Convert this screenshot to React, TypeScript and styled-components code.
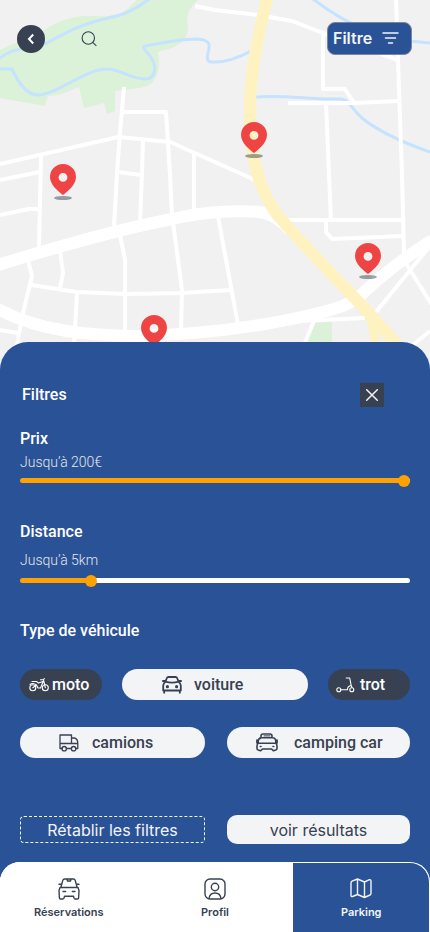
import React, { useState } from "react";
import styled, { createGlobalStyle } from "styled-components";

const color = {
  blue: "#2a5297",
  slate: "#374151",
  light: "#f3f4f6",
  orange: "#ffa200",
  red: "#ef4444",
  white: "#ffffff",
};

const GlobalStyle = createGlobalStyle`
  *, *::before, *::after { box-sizing: border-box; }
  body { margin: 0; background: ${color.blue}; }
  button, input { font: inherit; margin: 0; }
  svg { display: block; flex: none; }
`;

const Page = styled.main`
  display: flex;
  flex-direction: column;
  min-height: 100vh;
  font-family: Roboto, "Liberation Sans", sans-serif;
  color: ${color.white};
  background: ${color.blue};
`;

const MapArea = styled.section`
  position: relative;
  height: 372px;
  overflow: hidden;
  background: #f1f1f1;
`;

const MapDrawing = styled.svg`
  position: absolute;
  inset: 0;
  width: 100%;
  height: 100%;
`;

const Toolbar = styled.header`
  position: relative;
  display: flex;
  align-items: center;
  padding: 22px 18px 0 17px;
`;

const BackButton = styled.button`
  display: grid;
  place-items: center;
  width: 28px;
  height: 28px;
  padding: 0;
  border: 0;
  border-radius: 50%;
  background: ${color.slate};
`;

const SearchButton = styled.button`
  display: grid;
  place-items: center;
  width: 24px;
  height: 24px;
  margin-left: 32px;
  padding: 0;
  border: 0;
  background: none;
`;

const FilterButton = styled.button`
  display: flex;
  align-items: center;
  justify-content: space-between;
  width: 85px;
  height: 33px;
  margin-left: auto;
  padding: 0 12px 2px 5px;
  border: 1px solid #7d8694;
  border-radius: 8px;
  background: ${color.blue};
  color: ${color.light};
  font-family: Inter, sans-serif;
  font-size: 16px;
  font-weight: 600;
`;

const Sheet = styled.section`
  position: relative;
  flex: 1;
  margin-top: -30px;
  padding: 41px 20px 18px;
  border-radius: 28px 28px 0 0;
  background: ${color.blue};
`;

const SheetHeader = styled.div`
  display: flex;
  align-items: center;
  justify-content: space-between;
  padding: 0 26px 0 2px;
`;

const Heading = styled.h2`
  margin: 0;
  font-size: 16px;
  font-weight: 500;
  line-height: 24px;
`;

const CloseButton = styled.button`
  display: grid;
  place-items: center;
  width: 24px;
  height: 24px;
  padding: 0;
  border: 0;
  background: ${color.slate};
`;

const SliderField = styled.div<{ $gap: number }>`
  display: flex;
  flex-direction: column;
  margin-top: ${(p) => p.$gap}px;
`;

const FieldLabel = styled.label`
  font-size: 16px;
  font-weight: 500;
  line-height: 24px;
`;

const Hint = styled.output<{ $above: number; $below: number }>`
  margin: ${(p) => p.$above}px 0 ${(p) => p.$below}px;
  font-size: 14px;
  font-weight: 300;
  line-height: 20px;
  color: #e5e7eb;
`;

const Range = styled.input`
  appearance: none;
  width: 100%;
  height: 12px;
  margin: 0;
  background: transparent;
  &::-webkit-slider-runnable-track {
    height: 5px;
    border-radius: 3px;
    background: linear-gradient(${color.orange}, ${color.orange}) 0 0 / var(--fill) 100% no-repeat ${color.white};
  }
  &::-webkit-slider-thumb {
    appearance: none;
    width: 12px;
    height: 12px;
    margin-top: -3px;
    border-radius: 50%;
    background: ${color.orange};
  }
`;

const TypeHeading = styled(Heading)`
  margin-top: 33px;
`;

const ChipRow = styled.div<{ $columns: string; $gap: number; $above: number }>`
  display: grid;
  grid-template-columns: ${(p) => p.$columns};
  column-gap: ${(p) => p.$gap}px;
  margin-top: ${(p) => p.$above}px;
`;

const ChipButton = styled.button<{ $dark?: boolean; $gap: number; $inset: number }>`
  display: flex;
  align-items: center;
  gap: ${(p) => p.$gap}px;
  height: 31px;
  padding: 0 0 0 ${(p) => p.$inset}px;
  border: 0;
  border-radius: 16px;
  background: ${(p) => (p.$dark ? color.slate : color.light)};
  color: ${(p) => (p.$dark ? color.white : color.slate)};
  font-size: 16px;
  font-weight: 500;
  line-height: 24px;
`;

const Actions = styled.div`
  display: grid;
  grid-template-columns: 185fr 183fr;
  align-items: center;
  column-gap: 22px;
  margin-top: 57px;
`;

const ActionButton = styled.button<{ $outlined?: boolean }>`
  height: ${(p) => (p.$outlined ? 27 : 29)}px;
  padding: 0;
  border: ${(p) => (p.$outlined ? `1px dashed ${color.light}` : "0")};
  border-radius: ${(p) => (p.$outlined ? 4 : 10)}px;
  background: ${(p) => (p.$outlined ? "transparent" : color.light)};
  color: ${(p) => (p.$outlined ? color.light : color.slate)};
  font-family: Inter, sans-serif;
  font-size: 16px;
  font-weight: 400;
  line-height: 24px;
`;

const TabBar = styled.nav`
  display: grid;
  grid-template-columns: 8fr 9fr 8fr;
  height: 70px;
  overflow: hidden;
  border-radius: 20px 20px 0 0;
  background: ${color.white};
`;

const Tab = styled.a<{ $active?: boolean }>`
  display: flex;
  flex-direction: column;
  align-items: center;
  gap: 4px;
  padding-top: 15px;
  border: 1px solid ${color.white};
  border-bottom: 0;
  border-radius: ${(p) => (p.$active ? "0 20px 0 0" : "0")};
  background: ${(p) => (p.$active ? color.blue : color.white)};
  color: ${(p) => (p.$active ? color.light : color.slate)};
  font-family: Inter, sans-serif;
  font-size: 11px;
  font-weight: 600;
  line-height: 16px;
  text-decoration: none;
`;

const MINOR_ROADS = [
  "M195 6 L215 10 L258 15 L292 21 L323 33 V89 H345 L354 103",
  "M323 33 L398 60",
  "M288 103 H354 L398 101",
  "M396 0 L398 60 L402 175 L404 253 L407 265 L432 305",
  "M326 103 L329 175 L331 222",
  "M287 220 H403",
  "M326 221 V232 L332 239 L403 236",
  "M218 216 L238 325",
  "M31 285 L77 292 L127 294 L182 293 L230 290",
  "M0 164 L118 137 L170 142 L215 162 L255 180",
  "M124 87 L120 133 L117 173 L114 227",
  "M123 112 H166 L170 175 L172 215 L182 290 L181 332",
  "M143 140 L142 173 L140 222",
  "M194 152 V212",
  "M41 155 L39 248",
  "M0 180 L39 172",
  "M117 172 L142 175",
  "M0 215 L29 209 H39",
  "M28 260 L32 276 L22 317 L17 345",
  "M60 250 L63 273 L60 288",
  "M77 293 L74 345",
  "M120 235 L125 260 V332",
  "M0 330 L18 333",
  "M304 345 L314 321",
  "M300 321 L365 318",
  "M376 312 L429 247",
  "M413 345 L430 331",
];

const PINS = [
  { x: 63, y: 164 },
  { x: 254, y: 122 },
  { x: 368, y: 243 },
  { x: 154, y: 315 },
];

function CityMap() {
  return (
    <MapDrawing viewBox="0 0 430 372" preserveAspectRatio="xMidYMin slice" role="img" aria-label="Carte des parkings">
      <rect width="430" height="372" fill="#f1f1f1" />
      <path
        fill="#dbf1d8"
        d="M0 50 C18 41 35 37 49 27 C64 19 78 15 92 16 C108 17 119 16 126 10 L137 0 H198 C190 8 186 14 187 21 C190 33 186 42 172 48 C166 50 162 50 158 52 C161 66 158 76 152 83 C144 89 130 89 115 91 V111 L107 114 L104 103 L84 108 L79 87 C70 90 61 96 48 96 L45 106 L0 98 Z"
      />
      <path fill="#dbf1d8" d="M313 323 L332 322 V345 H305 Z" />
      <g fill="none" stroke="#c5e3fe" strokeWidth="3">
        <path d="M149 -1 C133 12 120 16 108 18 C80 24 62 35 43 45 C26 49 11 48 -1 59" />
        <path d="M0 69 H12 C18 82 26 95 38 95 C58 94 85 69 107 69 C120 69 130 79 145 79 C155 79 157 68 152 59 C149 53 141 48 145 46 C165 42 185 39 197 39 C209 40 211 43 208 53 C206 62 209 62 215 62 C229 62 240 57 251 51" />
        <path d="M313 -1 C330 12 350 24 370 32 C390 40 410 41 430 43" />
        <path d="M256 97 C290 95 310 100 340 99 C350 99 350 108 362 118 C380 133 410 145 430 152" />
      </g>
      <g fill="none" stroke="#ffffff" strokeWidth="4" strokeLinejoin="round">
        {MINOR_ROADS.map((d) => (
          <path key={d} d={d} />
        ))}
      </g>
      <g fill="none" stroke="#ffffff" strokeWidth="12">
        <path d="M-2 265 C50 249 115 230 172 219 C210 210 250 210 265 213 C275 216 282 221 290 230" />
        <path d="M-2 309 C40 332 90 335 133 336 C200 335 260 326 302 317 C335 309 350 306 362 294 C385 272 405 258 432 240" />
      </g>
      <g fill="none" stroke="#fef3c0">
        <path strokeWidth="12" d="M267 -1 C257 40 249 76 250 118 C251 155 257 186 276 213 C290 230 342 285 367 311 L402 350" />
        <path strokeWidth="9" d="M367 311 C373 322 375 335 376 350" />
      </g>
      {PINS.map((pin) => (
        <g key={`${pin.x}-${pin.y}`} transform={`translate(${pin.x} ${pin.y})`}>
          <ellipse cx="0" cy="34" rx="9" ry="2" fill="#111827" fillOpacity="0.4" />
          <path
            fill={color.red}
            fillRule="evenodd"
            d="M0 31 C-4 28 -13 21 -13 13 A13 13 0 0 1 13 13 C13 21 4 28 0 31 Z M0 9 A4.400 4.400 0 1 0 0 17.800 A4.400 4.400 0 1 0 0 9 Z"
          />
        </g>
      ))}
    </MapDrawing>
  );
}

const line = { fill: "none", stroke: "currentColor", strokeLinecap: "round", strokeLinejoin: "round" } as const;

const MotoIcon = () => (
  <svg width="20" height="15" viewBox="0 0 20 15" {...line} strokeWidth="1.100">
    <circle cx="3.800" cy="10.700" r="3" />
    <circle cx="16.300" cy="10.700" r="3" />
    <path d="M3.800 10.700 L7.500 8 L9 11 H11.500 L14 5 M1 7.500 C3 6 5 6.200 7.500 8 M3 4.500 H7.500 L9.500 6 L14 4.500 M11.500 2.800 H14.500 L16.300 10.700 M14.500 2.800 L15.300 1.500" />
  </svg>
);

const CarIcon = () => (
  <svg width="20" height="18" viewBox="0 0 20 18" {...line} strokeWidth="1.800">
    <path d="M3.400 5.700 L4.900 2 Q5.300 1 6.400 1 H13.600 Q14.700 1 15.100 2 L16.600 5.700 Q10 7.600 3.400 5.700 Z M3.400 5.700 C2 7 1.200 8 1.200 9.500 V14.500 H18.800 V9.500 C18.800 8 18 7 16.600 5.700 M0.900 5 H2.600 M17.400 5 H19.100 M2.200 14.500 V16.800 M17.800 14.500 V16.800" />
    <circle cx="5.400" cy="10.700" r="0.700" fill="currentColor" />
    <circle cx="14.600" cy="10.700" r="0.700" fill="currentColor" />
  </svg>
);

const ScooterIcon = () => (
  <svg width="19" height="16" viewBox="0 0 19 16" {...line} strokeWidth="1.100">
    <circle cx="2.800" cy="12.800" r="2" />
    <circle cx="15.800" cy="12.800" r="2" />
    <path d="M4.800 12.800 H11.400 C11.400 10.500 12.500 9 15.200 8.500 L13.700 1 H10.200 M15.200 8.500 L16 10.500" />
  </svg>
);

const TruckIcon = () => (
  <svg width="20" height="18" viewBox="0 0 20 18" {...line} strokeWidth="1.300">
    <path d="M3 14.500 H1 V1 H12.500 V9.500 M1 9.500 H18.800 M12.500 4 H15.500 C17.500 4.500 18.800 6.800 18.800 9.500 V14.500 H17 M7.500 14.500 H12.300" />
    <circle cx="5.200" cy="14.700" r="2.200" />
    <circle cx="14.600" cy="14.700" r="2.200" />
  </svg>
);

const CamperIcon = () => (
  <svg width="22" height="19" viewBox="0 0 22 19" {...line} strokeWidth="1.600">
    <path d="M5 4.800 V3 Q5 1 7 1 H14 Q16 1 16 3 V4.800 M5 4.800 H16.500 M3.500 6 L5 4.800 M2.200 10.300 V8.500 Q2.200 5 5.500 4.800 M16.500 4.800 Q19.800 5 19.800 8.500 V10.300 M2.200 10.300 H19.800 M2.200 10.300 Q1 11.500 1 13 V15.500 Q1 16.800 2.200 17 L4.500 17.800 L6.500 16 H15.500 L17.500 17.800 L19.800 17 Q21 16.800 21 15.500 V13 Q21 11.500 19.800 10.300 M0.900 7 V10 M21.100 7 V10" />
    <path d="M8 2.900 H14" strokeWidth="1" />
    <path d="M4.300 13.500 H5 M17 13.500 H17.700" />
  </svg>
);

const TaxiIcon = () => (
  <svg width="22" height="22" viewBox="0 0 22 22" {...line} strokeWidth="1.400">
    <path d="M3 9 L4.700 2.600 Q5.100 1 6.800 1 H15.200 Q16.900 1 17.300 2.600 L19 9 M9 1 L9.500 3 H12.500 L13 1 M2 9.500 H20 L21 12.500 L20.600 20 Q20.500 21 19.500 21 H17.200 Q16.400 21 16 20 L15.500 18.200 H6.500 L6 20 Q5.600 21 4.800 21 H2.500 Q1.500 21 1.400 20 L1 12.500 Z M1 6.300 H3.500 M18.500 6.300 H21 M5 13.500 H7.600 M14.400 13.500 H17" />
  </svg>
);

const ProfileIcon = () => (
  <svg width="22" height="22" viewBox="0 0 22 22" {...line} strokeWidth="1.400">
    <rect x="1" y="1" width="20" height="20" rx="5" />
    <circle cx="11" cy="9" r="3.700" />
    <path d="M5 20.500 C5.500 16.500 8 15 11 15 C14 15 16.500 16.500 17 20.500" />
  </svg>
);

const MapIcon = () => (
  <svg width="22" height="22" viewBox="0 0 22 22" {...line} strokeWidth="1.400">
    <path d="M1 5 Q1 3.700 2 3.200 L7.500 1 L14.500 4 L19.500 1.700 Q21 1.500 21 3 V15.500 Q21 16.500 20 17 L14.500 19.500 L7.500 16.500 L2.500 18.500 Q1 19 1 17.500 Z M7.500 1 V16.500 M14.500 4 V19.500" />
  </svg>
);

function FilterSlider(props: {
  id: string;
  title: string;
  unit: string;
  max: number;
  initial: number;
  gap: number;
  above: number;
  below: number;
}) {
  const [value, setValue] = useState(props.initial);
  const ratio = value / props.max;
  const fill = { "--fill": `calc(6px + (100% - 12px) * ${ratio})` } as React.CSSProperties;
  return (
    <SliderField $gap={props.gap}>
      <FieldLabel htmlFor={props.id}>{props.title}</FieldLabel>
      <Hint htmlFor={props.id} $above={props.above} $below={props.below}>
        {`Jusqu’à ${value}${props.unit}`}
      </Hint>
      <Range
        id={props.id}
        type="range"
        min={0}
        max={props.max}
        value={value}
        style={fill}
        onChange={(e) => setValue(Number(e.target.value))}
      />
    </SliderField>
  );
}

function VehicleChip(props: {
  label: string;
  icon: React.ReactNode;
  dark?: boolean;
  inset: number;
  gap: number;
}) {
  const [dark, setDark] = useState(Boolean(props.dark));
  return (
    <ChipButton
      type="button"
      aria-pressed={dark}
      $dark={dark}
      $inset={props.inset}
      $gap={props.gap}
      onClick={() => setDark(!dark)}
    >
      {props.icon}
      {props.label}
    </ChipButton>
  );
}

export default function App() {
  return (
    <Page>
      <GlobalStyle />
      <MapArea>
        <CityMap />
        <Toolbar>
          <BackButton type="button" aria-label="Retour">
            <svg width="8" height="12" viewBox="0 0 8 12" fill="none" stroke="#fff" strokeWidth="2">
              <path d="M6.200 1.500 L2 6 L6.200 10.500" />
            </svg>
          </BackButton>
          <SearchButton type="button" aria-label="Rechercher">
            <svg width="16" height="16" viewBox="0 0 16 16" fill="none" stroke={color.slate} strokeWidth="1.100">
              <circle cx="7.300" cy="7" r="6.200" />
              <path d="M11.700 11.400 L15.400 14.900" />
            </svg>
          </SearchButton>
          <FilterButton type="button">
            Filtre
            <svg width="17" height="12" viewBox="0 0 17 12" {...line} strokeWidth="1.500">
              <path d="M1 1 H16 M3.500 6 H13.500 M6.500 11 H10.500" />
            </svg>
          </FilterButton>
        </Toolbar>
      </MapArea>

      <Sheet>
        <SheetHeader>
          <Heading>Filtres</Heading>
          <CloseButton type="button" aria-label="Fermer">
            <svg width="12" height="12" viewBox="0 0 12 12" {...line} stroke="#f3f4f6" strokeWidth="1.500">
              <path d="M0.700 0.700 L11.300 11.300 M11.300 0.700 L0.700 11.300" />
            </svg>
          </CloseButton>
        </SheetHeader>

        <FilterSlider id="prix" title="Prix" unit="€" max={200} initial={200} gap={20} above={1} below={2} />
        <FilterSlider id="distance" title="Distance" unit="km" max={29} initial={5} gap={34} above={6} below={4} />

        <TypeHeading>Type de véhicule</TypeHeading>
        <ChipRow $columns="82px 1fr 82px" $gap={20} $above={26}>
          <VehicleChip label="moto" icon={<MotoIcon />} dark inset={9} gap={3} />
          <VehicleChip label="voiture" icon={<CarIcon />} inset={40} gap={12} />
          <VehicleChip label="trot" icon={<ScooterIcon />} dark inset={8} gap={5} />
        </ChipRow>
        <ChipRow $columns="185fr 183fr" $gap={22} $above={27}>
          <VehicleChip label="camions" icon={<TruckIcon />} inset={39} gap={13} />
          <VehicleChip label="camping car" icon={<CamperIcon />} inset={29} gap={16} />
        </ChipRow>

        <Actions>
          <ActionButton type="button" $outlined>
            Rétablir les filtres
          </ActionButton>
          <ActionButton type="button">voir résultats</ActionButton>
        </Actions>
      </Sheet>

      <TabBar>
        <Tab href="#reservations">
          <TaxiIcon />
          Réservations
        </Tab>
        <Tab href="#profil">
          <ProfileIcon />
          Profil
        </Tab>
        <Tab href="#parking" $active aria-current="page">
          <MapIcon />
          Parking
        </Tab>
      </TabBar>
    </Page>
  );
}
